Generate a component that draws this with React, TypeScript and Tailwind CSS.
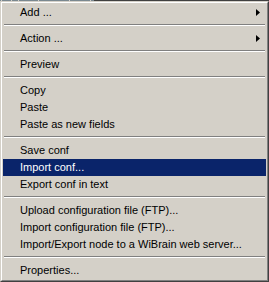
const items: ({ sep: true } | { label: string; sub?: boolean; active?: boolean })[] = [
  { label: "Add ...", sub: true },
  { sep: true },
  { label: "Action ...", sub: true },
  { sep: true },
  { label: "Preview" },
  { sep: true },
  { label: "Copy" },
  { label: "Paste" },
  { label: "Paste as new fields" },
  { sep: true },
  { label: "Save conf" },
  { label: "Import conf...", active: true },
  { label: "Export conf in text" },
  { sep: true },
  { label: "Upload configuration file (FTP)..." },
  { label: "Import configuration file (FTP)..." },
  { label: "Import/Export node to a WiBrain web server..." },
  { sep: true },
  { label: "Properties..." },
];

function Arrow({ active }: { active?: boolean }) {
  return (
    <svg width="4" height="7" viewBox="0 0 4 7" className="mr-[6px]">
      <path d="M0 0 L4 3.5 L0 7 Z" fill={active ? "#fff" : "#000"} />
    </svg>
  );
}

export default function App() {
  return (
    <div className="w-[269px] h-[282px] bg-[#d4d0c8] flex flex-col font-['Liberation_Sans',Arial,sans-serif] text-[11px] text-black">
      {/* strip of window behind the menu */}
      <div className="flex h-px shrink-0 bg-[#404040]">
        <span className="w-px bg-[#7a8890]" />
        <span className="w-px bg-[#d4d0c8]" />
        <span className="w-[9px] bg-[#7a8890]" />
        <span className="w-px bg-[#d4d0c8]" />
        <span className="w-[6px] bg-[#7a8890]" />
        <span className="w-px bg-[#d4d0c8]" />
        <span className="w-[19px] bg-[#7a8890]" />
        <span className="w-px bg-[#d4d0c8]" />
        <span className="w-[30px] bg-[#7a8890]" />
        <span className="w-px bg-[#d4d0c8]" />
        <span className="w-[20px] bg-[#7a8890]" />
        <span className="w-px bg-[#d4d0c8]" />
        <span className="w-[3px] bg-[#7a8890]" />
      </div>
      <div className="flex-1 border-t border-l border-t-[#d4d0c8] border-l-[#d4d0c8] border-r border-b border-r-[#404040] border-b-[#404040]">
        <div className="h-full border-t border-l border-t-white border-l-white border-r border-b border-r-[#808080] border-b-[#808080] p-px">
          {items.map((it, i) =>
            "sep" in it ? (
              <div key={i} className="h-[9px] pt-[3px] px-px">
                <div className="h-px bg-[#808080]" />
                <div className="h-px bg-white" />
              </div>
            ) : (
              <div
                key={i}
                className={`h-[17px] flex items-center justify-between pl-[17px] ${
                  it.active ? "bg-[#0a246a] text-white" : ""
                }`}
              >
                <span className="leading-none whitespace-nowrap">{it.label}</span>
                {it.sub && <Arrow active={it.active} />}
              </div>
            )
          )}
        </div>
      </div>
    </div>
  );
}
